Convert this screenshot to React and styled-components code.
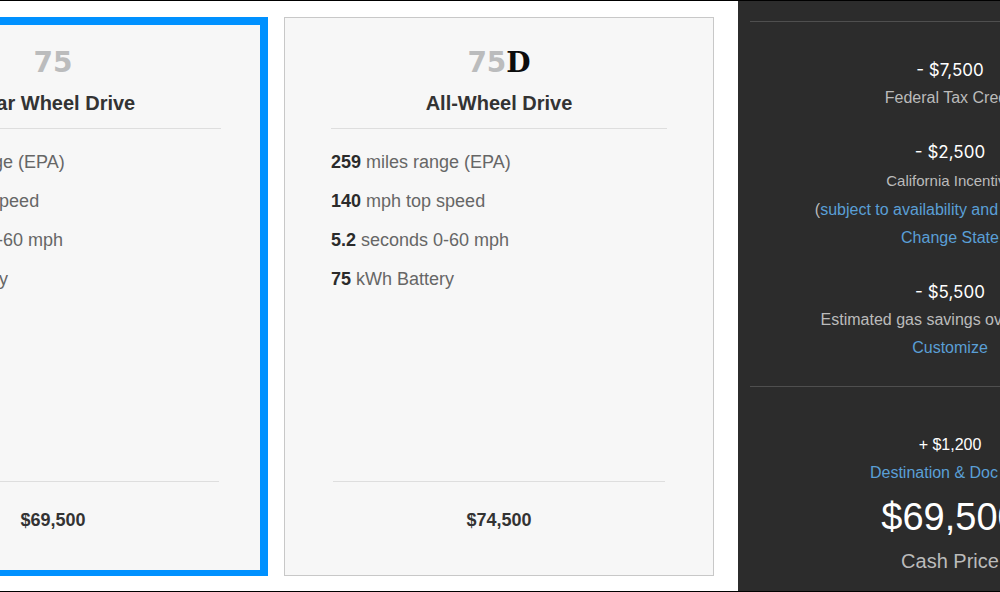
import React, { useState } from "react";
import styled, { createGlobalStyle } from "styled-components";

const models = [
  {
    id: "75",
    badge: "75",
    drive: "Rear Wheel Drive",
    specs: [
      ["249", "miles range (EPA)"],
      ["140", "mph top speed"],
      ["5.5", "seconds 0-60 mph"],
      ["75", "kWh Battery"],
    ],
    price: "$69,500",
  },
  {
    id: "75d",
    badge: "75",
    suffix: "D",
    drive: "All-Wheel Drive",
    specs: [
      ["259", "miles range (EPA)"],
      ["140", "mph top speed"],
      ["5.2", "seconds 0-60 mph"],
      ["75", "kWh Battery"],
    ],
    price: "$74,500",
  },
];

const ModelCard = ({ model, selected, onSelect }) => (
  <StyledCard $selected={selected}>
    <StyledRadio
      type="radio"
      name="model"
      value={model.id}
      checked={selected}
      onChange={() => onSelect(model.id)}
    />
    <StyledBadge>
      {model.badge}
      {model.suffix && <StyledBadgeSuffix>{model.suffix}</StyledBadgeSuffix>}
    </StyledBadge>
    <StyledTitle>{model.drive}</StyledTitle>
    <StyledSpecs>
      {model.specs.map(([value, text]) => (
        <li key={text}>
          <strong>{value}</strong> {text}
        </li>
      ))}
    </StyledSpecs>
    <StyledCardPrice>{model.price}</StyledCardPrice>
  </StyledCard>
);

const App = () => {
  const [selected, setSelected] = useState("75");

  return (
    <>
      <GlobalStyle />
      <StyledPage>
        <StyledOptions>
          {models.map((model) => (
            <ModelCard
              key={model.id}
              model={model}
              selected={selected === model.id}
              onSelect={setSelected}
            />
          ))}
        </StyledOptions>
        <StyledSummary>
          <StyledSavings>
            <StyledGroup>
              <StyledAmount>- $7,500</StyledAmount>
              <StyledLine>Federal Tax Credit</StyledLine>
            </StyledGroup>
            <StyledGroup>
              <StyledAmount>- $2,500</StyledAmount>
              <StyledLine $small>California Incentive</StyledLine>
              <StyledLine>
                (<StyledLink href="#">subject to availability and restrictions</StyledLink>)
              </StyledLine>
              <StyledLine>
                <StyledLink href="#">Change State</StyledLink>
              </StyledLine>
            </StyledGroup>
            <StyledGroup>
              <StyledAmount>- $5,500</StyledAmount>
              <StyledLine>Estimated gas savings over 5 years*</StyledLine>
              <StyledLine>
                <StyledLink href="#">Customize</StyledLink>
              </StyledLine>
            </StyledGroup>
          </StyledSavings>
          <StyledTotals>
            <StyledFee>+ $1,200</StyledFee>
            <StyledLine>
              <StyledLink href="#">Destination &amp; Doc Fee</StyledLink>
            </StyledLine>
            <StyledTotal>$69,500</StyledTotal>
            <StyledTotalLabel>Cash Price</StyledTotalLabel>
          </StyledTotals>
        </StyledSummary>
      </StyledPage>
    </>
  );
};

const GlobalStyle = createGlobalStyle`
    * {
      box-sizing: border-box;
    }
    body {
      margin: 0;
      background: #fff;
      font-family: "Liberation Sans", Arial, sans-serif;
    }
  `;

const StyledPage = styled.div`
    display: flex;
    justify-content: center;
    min-height: 100vh;
    overflow: hidden;
    border-top: 1px solid #000;
    border-bottom: 1px solid #000;
  `;

const StyledOptions = styled.main`
    display: flex;
    flex: 1 0 auto;
    gap: 16px;
    padding: 16px 24px 15px 0;
  `;

const StyledCard = styled.label`
    display: flex;
    flex: 1 0 430px;
    flex-direction: column;
    background: #f7f7f7;
    border-style: solid;
    border-color: ${({ $selected }) => ($selected ? "#0091ff" : "#c8c8c8")};
    border-width: ${({ $selected }) => ($selected ? "8px 8px 6px" : "1px")};
    padding: ${({ $selected }) => ($selected ? "24px 39px 36px" : "31px 46px 41px")};
    cursor: pointer;
  `;

const StyledRadio = styled.input`
    appearance: none;
    position: absolute;
    width: 1px;
    height: 1px;
    margin: 0;
    opacity: 0;
  `;

const StyledBadge = styled.div`
    color: #bbbcbd;
    font-family: "DejaVu Sans", sans-serif;
    font-size: 28px;
    font-weight: 700;
    line-height: 28px;
    text-align: center;
  `;

const StyledBadgeSuffix = styled.span`
    color: #0c0c0c;
    font-family: "DejaVu Serif", serif;
  `;

const StyledTitle = styled.div`
    margin-top: 14px;
    padding-bottom: 13px;
    border-bottom: 1px solid #dedede;
    color: #333;
    font-size: 20px;
    font-weight: 700;
    line-height: 24px;
    text-align: center;
  `;

const StyledSpecs = styled.ul`
    margin: 14px 0 0;
    padding: 0;
    list-style: none;
    color: #666;
    font-size: 18px;
    line-height: 39px;

    strong {
      color: #2b2b2b;
    }
  `;

const StyledCardPrice = styled.div`
    margin: auto 2px 0;
    padding-top: 24px;
    border-top: 1px solid #dedede;
    color: #333;
    font-size: 18px;
    font-weight: 700;
    line-height: 28px;
    text-align: center;
  `;

const StyledSummary = styled.aside`
    flex: 0 0 424px;
    padding: 20px 12px 12px;
    background: #2c2c2c;
    color: #bbb;
    font-size: 16px;
    line-height: 28px;
    text-align: center;
    white-space: nowrap;
  `;

const StyledSavings = styled.section`
    display: flex;
    flex-direction: column;
    gap: 26px;
    padding: 34px 0 24px;
    border-top: 1px solid #4f4f4f;
    border-bottom: 1px solid #4f4f4f;
  `;

const StyledGroup = styled.div`
    display: flex;
    flex-direction: column;
  `;

const StyledAmount = styled.div`
    color: #fff;
    font-family: Inter, sans-serif;
    font-size: 17px;
  `;

const StyledLine = styled.div`
    font-size: ${({ $small }) => ($small ? "15px" : "16px")};
    line-height: ${({ $small }) => ($small ? "30px" : "28px")};
  `;

const StyledLink = styled.a`
    color: #5a9fd6;
    text-decoration: none;
  `;

const StyledTotals = styled.section`
    padding-top: 44px;
  `;

const StyledFee = styled.div`
    color: #fff;
  `;

const StyledTotal = styled.div`
    color: #fff;
    font-size: 38px;
    line-height: 60px;
  `;

const StyledTotalLabel = styled.div`
    font-size: 20px;
  `;

export default App;
